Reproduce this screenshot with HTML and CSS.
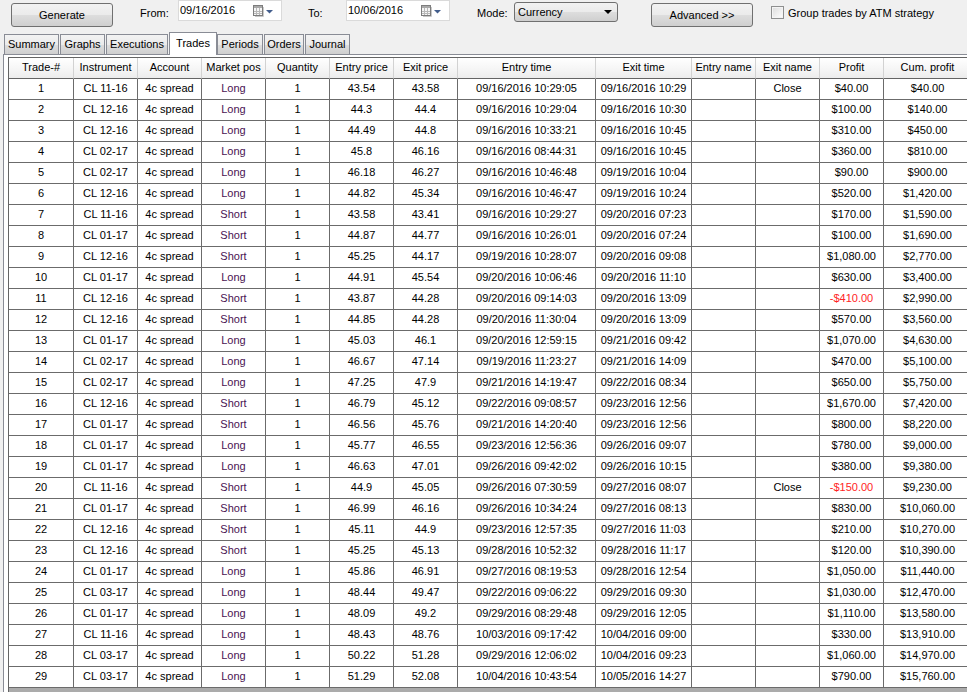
FILE: index.html
```html
<!DOCTYPE html>
<html lang="en">
<head>
  <meta charset="UTF-8">
  <title>Trade Performance</title>
  <link rel="stylesheet" href="styles.css">
</head>
<body>
  <!-- Toolbar -->
  <div class="toolbar">
    <button class="btn btn-generate">Generate</button>
    <span class="label label-from">From:</span>
    <div class="date-box">
      <span class="date-text">09/16/2016</span>
      <svg class="cal-icon" width="24" height="19" viewBox="0 0 24 19">
        <rect x="1.5" y="4.5" width="9" height="10" fill="#f6f6f6" stroke="#7d7d7d"/>
        <rect x="2" y="5" width="8" height="2" fill="#a9a9a9"/>
        <path d="M4.5 7v7M7.5 7v7M2 10.5h8M2 12.5h8" stroke="#b8b8b8" stroke-width="1"/>
        <path d="M11.5 6v9.5H3" fill="none" stroke="#c9c9c9"/>
        <polygon points="14,9 21,9 17.5,12.5" fill="#425d8c"/>
      </svg>
    </div>
    <span class="label label-to">To:</span>
    <div class="date-box">
      <span class="date-text">10/06/2016</span>
      <svg class="cal-icon" width="24" height="19" viewBox="0 0 24 19">
        <rect x="1.5" y="4.5" width="9" height="10" fill="#f6f6f6" stroke="#7d7d7d"/>
        <rect x="2" y="5" width="8" height="2" fill="#a9a9a9"/>
        <path d="M4.5 7v7M7.5 7v7M2 10.5h8M2 12.5h8" stroke="#b8b8b8" stroke-width="1"/>
        <path d="M11.5 6v9.5H3" fill="none" stroke="#c9c9c9"/>
        <polygon points="14,9 21,9 17.5,12.5" fill="#425d8c"/>
      </svg>
    </div>
    <span class="label label-mode">Mode:</span>
    <div class="select">
      <span>Currency</span>
      <svg class="select-arrow" width="8" height="4" viewBox="0 0 8 4">
        <polygon points="0,0 8,0 4,4" fill="#000"/>
      </svg>
    </div>
    <button class="btn btn-advanced">Advanced &gt;&gt;</button>
    <label class="check">
      <span class="check-box"></span>
      <span>Group trades by ATM strategy</span>
    </label>
  </div>

  <!-- Tabs -->
  <div class="tabs">
    <div class="tab tab-summary">Summary</div>
    <div class="tab tab-graphs">Graphs</div>
    <div class="tab tab-executions">Executions</div>
    <div class="tab tab-trades active">Trades</div>
    <div class="tab tab-periods">Periods</div>
    <div class="tab tab-orders">Orders</div>
    <div class="tab tab-journal">Journal</div>
  </div>

  <div class="panel">
    <div class="grid">
      <div class="row head">
        <div>Trade-#</div><div>Instrument</div><div>Account</div><div>Market pos</div><div>Quantity</div><div>Entry price</div><div>Exit price</div><div>Entry time</div><div>Exit time</div><div>Entry name</div><div>Exit name</div><div>Profit</div><div>Cum. profit</div>
      </div>
      <div class="row"><div>1</div><div>CL 11-16</div><div>4c spread</div><div class="pos">Long</div><div>1</div><div>43.54</div><div>43.58</div><div>09/16/2016 10:29:05</div><div>09/16/2016 10:29</div><div></div><div>Close</div><div>$40.00</div><div>$40.00</div></div>
      <div class="row"><div>2</div><div>CL 12-16</div><div>4c spread</div><div class="pos">Long</div><div>1</div><div>44.3</div><div>44.4</div><div>09/16/2016 10:29:04</div><div>09/16/2016 10:30</div><div></div><div></div><div>$100.00</div><div>$140.00</div></div>
      <div class="row"><div>3</div><div>CL 12-16</div><div>4c spread</div><div class="pos">Long</div><div>1</div><div>44.49</div><div>44.8</div><div>09/16/2016 10:33:21</div><div>09/16/2016 10:45</div><div></div><div></div><div>$310.00</div><div>$450.00</div></div>
      <div class="row"><div>4</div><div>CL 02-17</div><div>4c spread</div><div class="pos">Long</div><div>1</div><div>45.8</div><div>46.16</div><div>09/16/2016 08:44:31</div><div>09/16/2016 10:45</div><div></div><div></div><div>$360.00</div><div>$810.00</div></div>
      <div class="row"><div>5</div><div>CL 02-17</div><div>4c spread</div><div class="pos">Long</div><div>1</div><div>46.18</div><div>46.27</div><div>09/16/2016 10:46:48</div><div>09/19/2016 10:04</div><div></div><div></div><div>$90.00</div><div>$900.00</div></div>
      <div class="row"><div>6</div><div>CL 12-16</div><div>4c spread</div><div class="pos">Long</div><div>1</div><div>44.82</div><div>45.34</div><div>09/16/2016 10:46:47</div><div>09/19/2016 10:24</div><div></div><div></div><div>$520.00</div><div>$1,420.00</div></div>
      <div class="row"><div>7</div><div>CL 11-16</div><div>4c spread</div><div class="pos">Short</div><div>1</div><div>43.58</div><div>43.41</div><div>09/16/2016 10:29:27</div><div>09/20/2016 07:23</div><div></div><div></div><div>$170.00</div><div>$1,590.00</div></div>
      <div class="row"><div>8</div><div>CL 01-17</div><div>4c spread</div><div class="pos">Short</div><div>1</div><div>44.87</div><div>44.77</div><div>09/16/2016 10:26:01</div><div>09/20/2016 07:24</div><div></div><div></div><div>$100.00</div><div>$1,690.00</div></div>
      <div class="row"><div>9</div><div>CL 12-16</div><div>4c spread</div><div class="pos">Short</div><div>1</div><div>45.25</div><div>44.17</div><div>09/19/2016 10:28:07</div><div>09/20/2016 09:08</div><div></div><div></div><div>$1,080.00</div><div>$2,770.00</div></div>
      <div class="row"><div>10</div><div>CL 01-17</div><div>4c spread</div><div class="pos">Long</div><div>1</div><div>44.91</div><div>45.54</div><div>09/20/2016 10:06:46</div><div>09/20/2016 11:10</div><div></div><div></div><div>$630.00</div><div>$3,400.00</div></div>
      <div class="row"><div>11</div><div>CL 12-16</div><div>4c spread</div><div class="pos">Short</div><div>1</div><div>43.87</div><div>44.28</div><div>09/20/2016 09:14:03</div><div>09/20/2016 13:09</div><div></div><div></div><div class="loss">-$410.00</div><div>$2,990.00</div></div>
      <div class="row"><div>12</div><div>CL 12-16</div><div>4c spread</div><div class="pos">Short</div><div>1</div><div>44.85</div><div>44.28</div><div>09/20/2016 11:30:04</div><div>09/20/2016 13:09</div><div></div><div></div><div>$570.00</div><div>$3,560.00</div></div>
      <div class="row"><div>13</div><div>CL 01-17</div><div>4c spread</div><div class="pos">Long</div><div>1</div><div>45.03</div><div>46.1</div><div>09/20/2016 12:59:15</div><div>09/21/2016 09:42</div><div></div><div></div><div>$1,070.00</div><div>$4,630.00</div></div>
      <div class="row"><div>14</div><div>CL 02-17</div><div>4c spread</div><div class="pos">Long</div><div>1</div><div>46.67</div><div>47.14</div><div>09/19/2016 11:23:27</div><div>09/21/2016 14:09</div><div></div><div></div><div>$470.00</div><div>$5,100.00</div></div>
      <div class="row"><div>15</div><div>CL 02-17</div><div>4c spread</div><div class="pos">Long</div><div>1</div><div>47.25</div><div>47.9</div><div>09/21/2016 14:19:47</div><div>09/22/2016 08:34</div><div></div><div></div><div>$650.00</div><div>$5,750.00</div></div>
      <div class="row"><div>16</div><div>CL 12-16</div><div>4c spread</div><div class="pos">Short</div><div>1</div><div>46.79</div><div>45.12</div><div>09/22/2016 09:08:57</div><div>09/23/2016 12:56</div><div></div><div></div><div>$1,670.00</div><div>$7,420.00</div></div>
      <div class="row"><div>17</div><div>CL 01-17</div><div>4c spread</div><div class="pos">Short</div><div>1</div><div>46.56</div><div>45.76</div><div>09/21/2016 14:20:40</div><div>09/23/2016 12:56</div><div></div><div></div><div>$800.00</div><div>$8,220.00</div></div>
      <div class="row"><div>18</div><div>CL 01-17</div><div>4c spread</div><div class="pos">Long</div><div>1</div><div>45.77</div><div>46.55</div><div>09/23/2016 12:56:36</div><div>09/26/2016 09:07</div><div></div><div></div><div>$780.00</div><div>$9,000.00</div></div>
      <div class="row"><div>19</div><div>CL 01-17</div><div>4c spread</div><div class="pos">Long</div><div>1</div><div>46.63</div><div>47.01</div><div>09/26/2016 09:42:02</div><div>09/26/2016 10:15</div><div></div><div></div><div>$380.00</div><div>$9,380.00</div></div>
      <div class="row"><div>20</div><div>CL 11-16</div><div>4c spread</div><div class="pos">Short</div><div>1</div><div>44.9</div><div>45.05</div><div>09/26/2016 07:30:59</div><div>09/27/2016 08:07</div><div></div><div>Close</div><div class="loss">-$150.00</div><div>$9,230.00</div></div>
      <div class="row"><div>21</div><div>CL 01-17</div><div>4c spread</div><div class="pos">Short</div><div>1</div><div>46.99</div><div>46.16</div><div>09/26/2016 10:34:24</div><div>09/27/2016 08:13</div><div></div><div></div><div>$830.00</div><div>$10,060.00</div></div>
      <div class="row"><div>22</div><div>CL 12-16</div><div>4c spread</div><div class="pos">Short</div><div>1</div><div>45.11</div><div>44.9</div><div>09/23/2016 12:57:35</div><div>09/27/2016 11:03</div><div></div><div></div><div>$210.00</div><div>$10,270.00</div></div>
      <div class="row"><div>23</div><div>CL 12-16</div><div>4c spread</div><div class="pos">Short</div><div>1</div><div>45.25</div><div>45.13</div><div>09/28/2016 10:52:32</div><div>09/28/2016 11:17</div><div></div><div></div><div>$120.00</div><div>$10,390.00</div></div>
      <div class="row"><div>24</div><div>CL 01-17</div><div>4c spread</div><div class="pos">Long</div><div>1</div><div>45.86</div><div>46.91</div><div>09/27/2016 08:19:53</div><div>09/28/2016 12:54</div><div></div><div></div><div>$1,050.00</div><div>$11,440.00</div></div>
      <div class="row"><div>25</div><div>CL 03-17</div><div>4c spread</div><div class="pos">Long</div><div>1</div><div>48.44</div><div>49.47</div><div>09/22/2016 09:06:22</div><div>09/29/2016 09:30</div><div></div><div></div><div>$1,030.00</div><div>$12,470.00</div></div>
      <div class="row"><div>26</div><div>CL 01-17</div><div>4c spread</div><div class="pos">Long</div><div>1</div><div>48.09</div><div>49.2</div><div>09/29/2016 08:29:48</div><div>09/29/2016 12:05</div><div></div><div></div><div>$1,110.00</div><div>$13,580.00</div></div>
      <div class="row"><div>27</div><div>CL 11-16</div><div>4c spread</div><div class="pos">Long</div><div>1</div><div>48.43</div><div>48.76</div><div>10/03/2016 09:17:42</div><div>10/04/2016 09:00</div><div></div><div></div><div>$330.00</div><div>$13,910.00</div></div>
      <div class="row"><div>28</div><div>CL 03-17</div><div>4c spread</div><div class="pos">Long</div><div>1</div><div>50.22</div><div>51.28</div><div>09/29/2016 12:06:02</div><div>10/04/2016 09:23</div><div></div><div></div><div>$1,060.00</div><div>$14,970.00</div></div>
      <div class="row"><div>29</div><div>CL 03-17</div><div>4c spread</div><div class="pos">Long</div><div>1</div><div>51.29</div><div>52.08</div><div>10/04/2016 10:43:54</div><div>10/05/2016 14:27</div><div></div><div></div><div>$790.00</div><div>$15,760.00</div></div>
    </div>
  </div>
</body>
</html>
```

FILE: styles.css
```css
* {
  margin: 0;
  padding: 0;
  box-sizing: border-box;
}

body {
  width: 967px;
  height: 692px;
  overflow: hidden;
  background: #f0f0f0;
  font-family: "Liberation Sans", Arial, sans-serif;
  font-size: 11px;
  color: #000;
}

/* toolbar */
.toolbar {
  display: flex;
  align-items: flex-start;
  height: 32px;
}

.btn {
  margin-top: 3px;
  width: 102px;
  height: 24px;
  border: 1px solid #707070;
  border-radius: 3px;
  background: linear-gradient(#f2f2f2 0%, #ebebeb 48%, #dddddd 52%, #cfcfcf 100%);
  font: inherit;
  color: #000;
}

.btn-generate {
  margin-left: 11px;
}

.btn-advanced {
  margin-left: 33px;
}

.label {
  height: 26px;
  line-height: 26px;
}

.label-from {
  margin-left: 27px;
  width: 38px;
}

.label-to {
  margin-left: 26px;
  width: 38px;
}

.label-mode {
  margin-left: 27px;
  width: 37px;
}

.date-box {
  display: flex;
  align-items: center;
  width: 104px;
  height: 21px;
  background: #fff;
  border: 1px solid #dadada;
  padding-left: 1px;
}

.date-text {
  line-height: 18px;
  align-self: flex-start;
}

.cal-icon {
  margin-left: auto;
  margin-right: 5px;
}

.select {
  display: flex;
  align-items: center;
  margin-top: 2px;
  width: 104px;
  height: 20px;
  padding: 0 4px 0 3px;
  border: 1px solid #707070;
  border-radius: 3px;
  background: linear-gradient(#f2f2f2 0%, #ebebeb 48%, #dddddd 52%, #cfcfcf 100%);
}

.select-arrow {
  margin-left: auto;
  margin-right: 1px;
}

.check {
  display: flex;
  align-items: center;
  margin-left: 18px;
  height: 25px;
}

.check-box {
  width: 13px;
  height: 13px;
  margin-right: 4px;
  border: 1px solid #8e8f8f;
  background: linear-gradient(135deg, #dcdcdc 0%, #f4f4f4 70%, #ffffff 100%);
  box-shadow: inset 0 0 0 1px #f4f4f4;
}

/* tabs */
.tabs {
  display: flex;
  align-items: flex-end;
  height: 22px;
  padding-left: 4px;
}

.tab {
  height: 20px;
  line-height: 19px;
  text-align: center;
  border: 1px solid #898c95;
  border-bottom: none;
  margin-right: 1px;
  background: linear-gradient(#f3f3f3 0%, #ebebeb 50%, #dddddd 51%, #cfcfcf 100%);
}

.tab.active {
  position: relative;
  height: 23px;
  line-height: 20px;
  margin-bottom: -1px;
  margin-right: 0;
  background: #fff;
}

.tab-summary { width: 55px; }
.tab-graphs { width: 45px; }
.tab-executions { width: 62px; }
.tab-trades { width: 48px; }
.tab-periods { width: 46px; }
.tab-orders { width: 40px; }
.tab-journal { width: 45px; }

.panel {
  margin-left: 3px;
  height: 638px;
  padding: 2px 0 0 4px;
  background: #fff;
  border-top: 1px solid #898c95;
  border-left: 1px solid #898c95;
}

/* trades grid */
.grid {
  height: 640px;
  overflow: hidden;
  background: #ababab;
  border-top: 1px solid #646464;
  border-left: 1px solid #646464;
}

.row {
  display: grid;
  grid-template-columns: 65px 64px 64px 64px 64px 64px 64px 138px 96px 64px 64px 64px 88px;
  width: 963px;
  height: 21px;
  background: #fff;
}

.row div {
  height: 21px;
  line-height: 19px;
  text-align: center;
  white-space: nowrap;
  overflow: hidden;
  border-right: 1px solid #6b6b6b;
  border-bottom: 1px solid #6b6b6b;
}

.row.head {
  background: linear-gradient(#ffffff 0%, #f4f4f4 60%, #ebebeb 100%);
}

.row.head div {
  border-right: 1px solid #d2d2d2;
  border-bottom: 1px solid #646464;
}

.pos {
  color: #4a1252;
}

.loss {
  color: #ff2424;
}
```
